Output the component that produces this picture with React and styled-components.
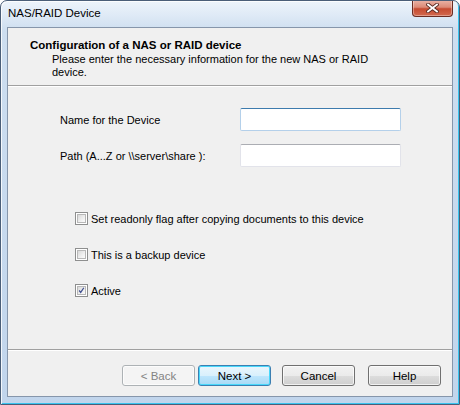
import React from 'react'
import styled, { createGlobalStyle } from 'styled-components'

const Global = createGlobalStyle`
  html, body { margin: 0; padding: 0; background: #ffffff; }
  body { font-family: "Segoe UI", "Liberation Sans", Arial, sans-serif; font-size: 11px; color: #000; }
`

const Frame = styled.div`
  box-sizing: border-box;
  width: 460px;
  height: 405px;
  display: flex;
  flex-direction: column;
  border: 1px solid #4a5e78;
  border-radius: 7px 7px 0 0;
  background: linear-gradient(180deg, #edf4fb 0px, #dfeaf6 14px, #cddef0 30px, #c1d5ec 100%);
  box-shadow: inset 1px 1px 0 rgba(255,255,255,0.8), inset -1px -1px 0 #39c4ef;
  overflow: hidden;
`

const TitleBar = styled.div`
  height: 26px;
  display: flex;
  align-items: flex-start;
  justify-content: space-between;
  padding-left: 7px;
`

const Caption = styled.span`
  font-size: 11.5px;
  line-height: 12px;
  margin-top: 6px;
  color: #000;
`

const CloseBtn = styled.div`
  width: 41px;
  height: 17px;
  margin-right: 6px;
  margin-top: -1px;
  box-sizing: border-box;
  border: 1px solid #6b2c22;
  border-top: none;
  border-radius: 0 0 4px 4px;
  background: linear-gradient(180deg, #ebb5a8 0%, #dc8a77 45%, #c64b31 55%, #d26a4f 100%);
  box-shadow: inset 0 0 0 1px rgba(255,255,255,0.35);
  display: flex;
  align-items: center;
  justify-content: center;
`

const Client = styled.div`
  flex: 1;
  margin: 0 6px 7px 6px;
  border: 1px solid #8696ab;
  background: #f0f0f0;
  display: flex;
  flex-direction: column;
`

const Header = styled.div`
  height: 58px;
  padding: 10px 0 0 22px;
  box-sizing: border-box;
  border-bottom: 1px solid #a0a0a0;
`

const HeadTitle = styled.div`
  font-weight: bold;
  font-size: 11.5px;
  line-height: 15px;
`

const HeadText = styled.div`
  padding-left: 22px;
  width: 318px;
  line-height: 13px;
`

const Body = styled.div`
  flex: 1;
  padding: 21px 0 0 52px;
  border-top: 1px solid #ffffff;
  border-bottom: 1px solid #a0a0a0;
`

const Row = styled.div`
  display: flex;
  align-items: center;
  height: 23px;
  margin-bottom: ${p => p.gap || 0}px;
`

const Label = styled.span`
  width: 180px;
`

const Input = styled.div`
  width: 161px;
  height: 23px;
  box-sizing: border-box;
  background: #fff;
  border: 1px solid ${p => (p.focus ? '#b4d0ea' : '#e2e3ea')};
  border-top-color: ${p => (p.focus ? '#3d7bad' : '#abadb3')};
  border-radius: 2px;
`

const Checks = styled.div`
  padding: 45px 0 0 15px;
  display: flex;
  flex-direction: column;
  gap: 23px;
`

const CheckRow = styled.label`
  display: flex;
  align-items: center;
  gap: 3px;
  height: 13px;
`

const Box = styled.span`
  width: 13px;
  height: 13px;
  flex: none;
  box-sizing: border-box;
  border: 1px solid #8e8f8f;
  background: #fff;
  display: flex;
  align-items: center;
  justify-content: center;
`

const BoxInner = styled.span`
  width: 9px;
  height: 9px;
  box-sizing: border-box;
  border: 1px solid #b8b8b8;
  background: linear-gradient(135deg, #d9d9d9 0%, #f0f0f0 60%, #fbfbfb 100%);
  display: flex;
  align-items: center;
  justify-content: center;
`

const Footer = styled.div`
  height: 46px;
  border-top: 1px solid #ffffff;
  box-sizing: border-box;
  display: flex;
  align-items: flex-start;
  padding: 14px 0 0 114px;
`

const Button = styled.button`
  width: 73px;
  height: 21px;
  margin-right: ${p => p.mr || 0}px;
  box-sizing: border-box;
  padding: 0;
  font-family: inherit;
  font-size: 11.5px;
  border-radius: 3px;
  border: 1px solid ${p => (p.kind === 'disabled' ? '#adb2b5' : p.kind === 'default' ? '#3c7fb1' : '#707070')};
  color: ${p => (p.kind === 'disabled' ? '#838383' : '#000')};
  background: ${p =>
    p.kind === 'disabled'
      ? '#f4f4f4'
      : p.kind === 'default'
      ? 'linear-gradient(180deg, #eaf6fd 0%, #d9f0fc 50%, #bee6fd 51%, #a7d9f5 100%)'
      : 'linear-gradient(180deg, #f2f2f2 0%, #ebebeb 50%, #dddddd 51%, #cfcfcf 100%)'};
  box-shadow: inset 0 0 0 1px ${p => (p.kind === 'default' ? '#48d8fb' : 'rgba(255,255,255,0.7)')};
`

const Check = ({ checked, children }) => (
  <CheckRow>
    <Box>
      <BoxInner>
        {checked && (
          <svg width="9" height="9" viewBox="0 0 9 9">
            <path d="M1.5 4.5 L3.5 7 L7.5 1" fill="none" stroke="#3f4f8f" strokeWidth="1.6" />
          </svg>
        )}
      </BoxInner>
    </Box>
    <span>{children}</span>
  </CheckRow>
)

export default function App() {
  return (
    <>
      <Global />
      <Frame>
        <TitleBar>
          <Caption>NAS/RAID Device</Caption>
          <CloseBtn>
            <svg width="13" height="10" viewBox="0 0 13 10">
              <path d="M2 1.5 L11 8.5 M11 1.5 L2 8.5" stroke="#5a2a22" strokeWidth="3.6" strokeLinecap="square" />
              <path d="M2 1.5 L11 8.5 M11 1.5 L2 8.5" stroke="#ffffff" strokeWidth="1.8" strokeLinecap="square" />
            </svg>
          </CloseBtn>
        </TitleBar>
        <Client>
          <Header>
            <HeadTitle>Configuration of a NAS or RAID device</HeadTitle>
            <HeadText>Please enter the necessary information for the new NAS or RAID device.</HeadText>
          </Header>
          <Body>
            <Row gap={13}>
              <Label>Name for the Device</Label>
              <Input focus />
            </Row>
            <Row>
              <Label>Path (A...Z or \\server\share ):</Label>
              <Input />
            </Row>
            <Checks>
              <Check>Set readonly flag after copying documents to this device</Check>
              <Check>This is a backup device</Check>
              <Check checked>Active</Check>
            </Checks>
          </Body>
          <Footer>
            <Button kind="disabled" mr={3}>&lt; Back</Button>
            <Button kind="default" mr={11}>Next &gt;</Button>
            <Button mr={13}>Cancel</Button>
            <Button>Help</Button>
          </Footer>
        </Client>
      </Frame>
    </>
  )
}
